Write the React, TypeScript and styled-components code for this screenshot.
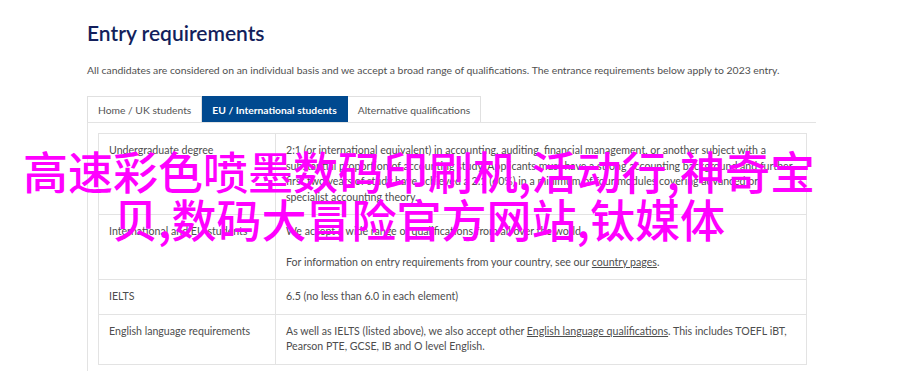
import styled, { createGlobalStyle } from "styled-components";

const GlobalStyle = createGlobalStyle`
  html, body {
    margin: 0;
    padding: 0;
    background: #fff;
  }
  body {
    font-family: Lato, "Liberation Sans", sans-serif;
    color: #4d4d4d;
  }
`;

const Screen = styled.div`
  position: relative;
  width: 900px;
  height: 383px;
  overflow: hidden;
`;

const Page = styled.div`
  padding: 20px 0 0 87px;
  width: 729px;
`;

const Title = styled.h2`
  margin: 0;
  font-family: Lato, "Liberation Sans", sans-serif;
  font-size: 21px;
  line-height: 26px;
  font-weight: 600;
  color: #131f5c;
`;

const Intro = styled.p`
  margin: 16px 0 18px;
  font-size: 10.4px;
  line-height: 16px;
  color: #505050;
  white-space: nowrap;
`;

const TabBar = styled.div`
  display: flex;
`;

const Tab = styled.div<{ $active?: boolean }>`
  height: 26px;
  box-sizing: border-box;
  padding: 0 10px;
  display: flex;
  align-items: center;
  font-size: 10.3px;
  border: 1px solid ${(props) => (props.$active ? "#00498f" : "#e0e0e0")};
  border-bottom: none;
  background: ${(props) => (props.$active ? "#00498f" : "#fff")};
  color: ${(props) => (props.$active ? "#fff" : "#555")};
  font-weight: ${(props) => (props.$active ? 700 : 400)};
  & + & {
    border-left: none;
  }
`;

const Panel = styled.div`
  border-top: 1px solid #e3e3e3;
  border-left: 1px solid #e3e3e3;
  padding: 10px 9px 6px 10px;
`;

const Table = styled.table`
  width: 709px;
  border-collapse: collapse;
  font-size: 10.6px;
  line-height: 15.5px;
  color: #4d4d4d;
  tr {
    border: 1px solid #e3e3e3;
  }
`;

const LabelCell = styled.td`
  width: 156px;
  padding: 9px 10px;
  vertical-align: top;
  border-right: 1px solid #e3e3e3;
`;

const ValueCell = styled.td`
  padding: 9px 10px;
  vertical-align: top;
`;

const P = styled.p`
  margin: 0;
  & + & {
    margin-top: 15px;
  }
`;

const A = styled.a`
  color: inherit;
  text-decoration: underline;
`;

const Watermark = styled.div`
  position: absolute;
  top: 147px;
  left: 0;
  width: 838px;
  text-align: center;
  font-family: "Noto Sans CJK SC", sans-serif;
  font-size: 45px;
  line-height: 48px;
  font-weight: 500;
  color: #ff00ff;
  pointer-events: none;
`;

interface RowData {
  label: string;
  content: React.ReactNode;
}

const rows: RowData[] = [
  {
    label: "Undergraduate degree",
    content: (
      <P>
        2:1 (or international equivalent) in accounting, auditing, financial
        management, or another subject with a substantial proportion of
        accounting study. Applicants must have a strong accounting background
        and further first two years of study have achieved a 2:1 (60%) in a
        minimum of four modules covering advanced or specialist accounting
        theory.
      </P>
    ),
  },
  {
    label: "International and EU students",
    content: (
      <>
        <P>We accept a wide range of qualifications from all over the world.</P>
        <P>
          For information on entry requirements from your country, see our{" "}
          <A href="#">country pages</A>.
        </P>
      </>
    ),
  },
  {
    label: "IELTS",
    content: <P>6.5 (no less than 6.0 in each element)</P>,
  },
  {
    label: "English language requirements",
    content: (
      <P>
        As well as IELTS (listed above), we also accept other{" "}
        <A href="#">English language qualifications</A>. This includes TOEFL
        iBT, Pearson PTE, GCSE, IB and O level English.
      </P>
    ),
  },
];

const tabs = [
  "Home / UK students",
  "EU / International students",
  "Alternative qualifications",
];

/** 입학 요건 페이지 */
const App = () => {
  return (
    <>
      <GlobalStyle />
      <Screen>
        <Page>
          <Title>Entry requirements</Title>
          <Intro>
            All candidates are considered on an individual basis and we accept
            a broad range of qualifications. The entrance requirements below
            apply to 2023 entry.
          </Intro>
          <TabBar>
            {tabs.map((tab, i) => (
              <Tab key={tab} $active={i === 1}>
                {tab}
              </Tab>
            ))}
          </TabBar>
          <Panel>
            <Table>
              <tbody>
                {rows.map((row) => (
                  <tr key={row.label}>
                    <LabelCell>{row.label}</LabelCell>
                    <ValueCell>{row.content}</ValueCell>
                  </tr>
                ))}
              </tbody>
            </Table>
          </Panel>
        </Page>
        <Watermark>
          高速彩色喷墨数码印刷机,活动行,神奇宝
          <br />
          贝,数码大冒险官方网站,钛媒体
        </Watermark>
      </Screen>
    </>
  );
};

export default App;
